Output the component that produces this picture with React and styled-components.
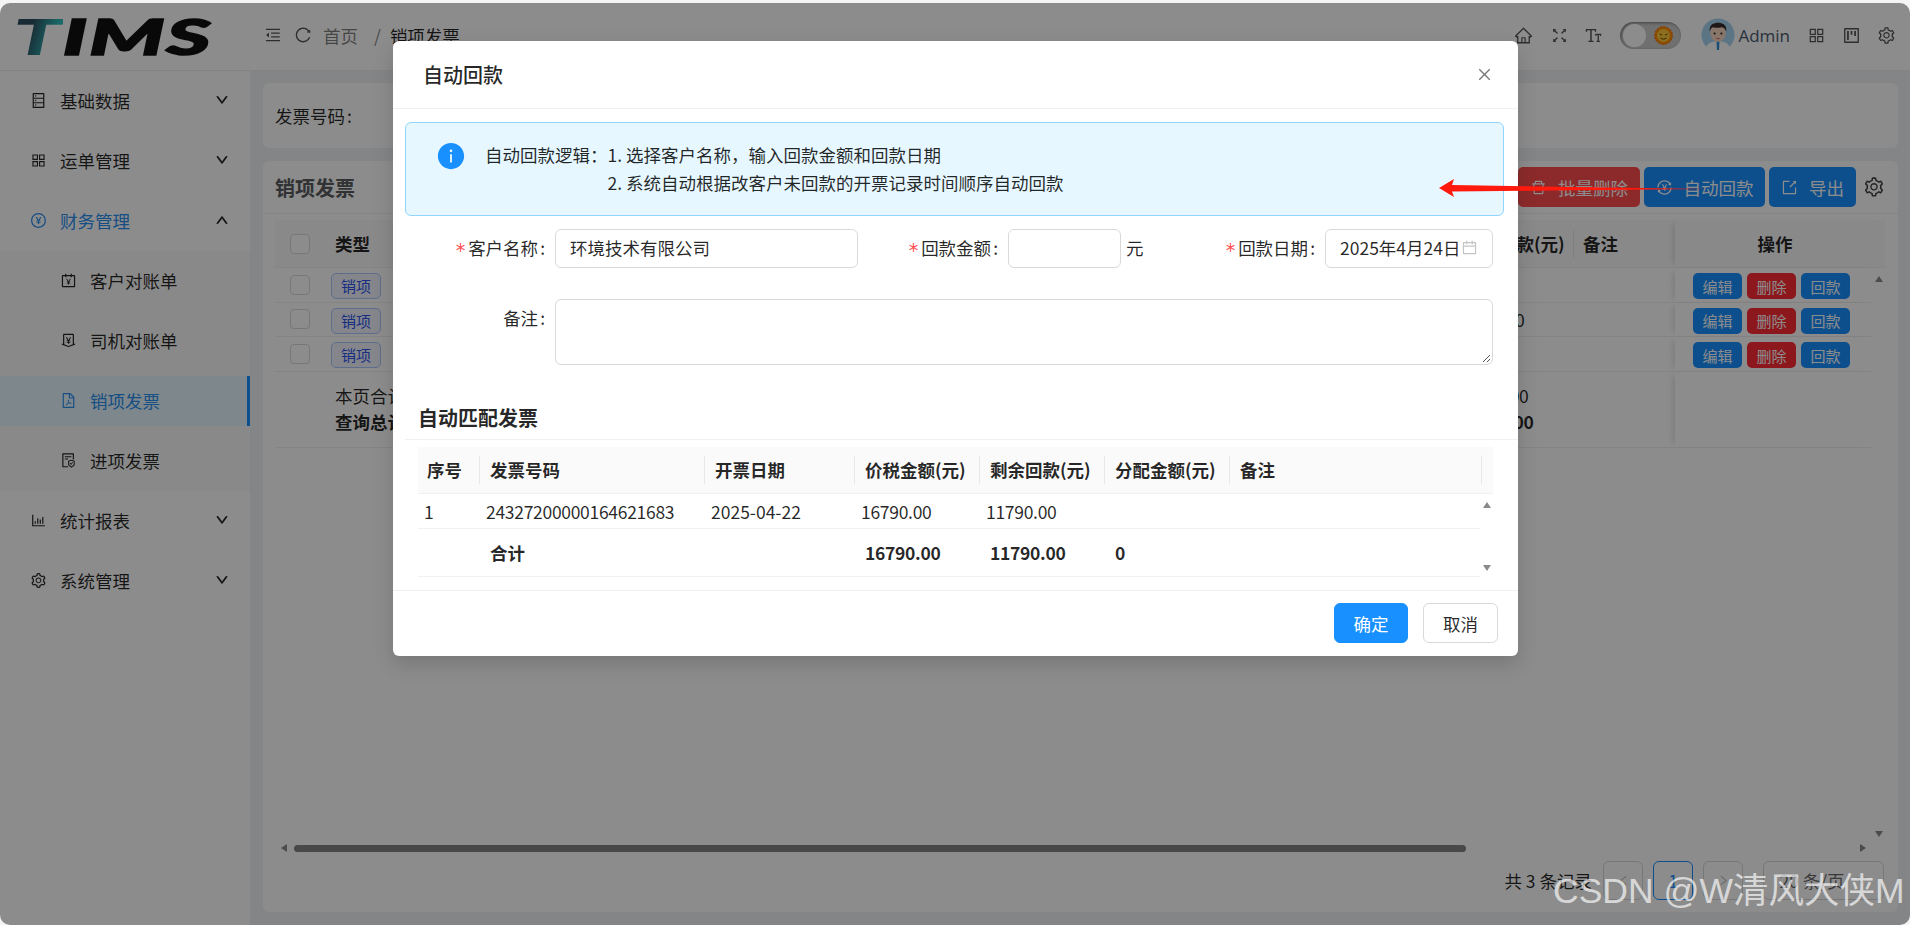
import React from 'react';
import styled, { createGlobalStyle } from 'styled-components';
import {
  AiOutlineDatabase, AiOutlineAppstore, AiOutlinePayCircle, AiOutlineAccountBook,
  AiOutlineMoneyCollect, AiOutlineFilePdf, AiOutlineFileProtect, AiOutlineBarChart,
  AiOutlineSetting, AiOutlineDown, AiOutlineUp, AiOutlineMenuFold, AiOutlineReload,
  AiOutlineHome, AiOutlineFullscreen, AiOutlineFontSize, AiOutlineProject, AiOutlineClose,
  AiOutlineDelete, AiOutlineTransaction, AiOutlineExport, AiOutlineCalendar, AiFillInfoCircle,
  AiOutlineLeft, AiOutlineRight,
} from 'react-icons/ai';

const Global = createGlobalStyle`
  html, body { margin: 0; height: 100%; overflow: hidden; background: #f4f4f4; }
  body { font-family: "Noto Sans CJK SC", "Liberation Sans", sans-serif; font-size: 17.5px; color: rgba(0,0,0,.85); }
  * { box-sizing: border-box; }
`;

const Shell = styled.div`
  position: relative;
  margin-top: 3px;
  height: 922px;
  width: 1910px;
  border-radius: 10px;
  overflow: hidden;
  background: #f0f2f5;
  display: flex;
  flex-direction: column;
`;

const TopBar = styled.header`
  height: 68px;
  flex: none;
  display: flex;
  align-items: center;
  background: #fff;
  border-bottom: 1px solid #eee;
  padding: 0 14px 3px 13px;
`;

const Logo = styled.div`
  width: 251px;
  height: 44px;
  font-family: Lato, sans-serif;
  font-weight: 900;
  font-style: italic;
  font-size: 49px;
  line-height: 46px;
  color: #111;
  -webkit-text-stroke: 1.5px #111;
  span { display: inline-block; transform: scaleX(1.74); transform-origin: left center; white-space: nowrap; letter-spacing: 1px; }
  b {
    font-weight: 900;
    -webkit-text-stroke: 0;
    background: linear-gradient(100deg, #2c4e5d 35%, #31c0c0 75%);
    -webkit-background-clip: text;
    background-clip: text;
    color: transparent;
  }
`;

const Crumbs = styled.div`
  display: flex;
  align-items: center;
  color: rgba(0,0,0,.5);
  svg { font-size: 18px; color: #555; }
`;

const CrumbIcon = styled.span`
  display: flex;
  margin-right: ${(p) => p.$gap}px;
`;

const CrumbSep = styled.span`
  margin: 0 9px 0 16px;
`;

const CrumbNow = styled.span`
  color: rgba(0,0,0,.85);
`;

const TopRight = styled.div`
  margin-left: auto;
  display: flex;
  align-items: center;
  color: #555;
  svg { font-size: 19px; display: block; }
`;

const TopIcon = styled.span`
  display: flex;
  margin-left: ${(p) => p.$left}px;
`;

const Switch = styled.div`
  width: 61px;
  height: 27px;
  margin-left: 17px;
  border-radius: 14px;
  background: #ccc;
  padding: 2px 8px 2px 3px;
  display: flex;
  align-items: center;
  justify-content: space-between;
  box-shadow: inset 1px 1px 3px rgba(0,0,0,.4);
`;

const Knob = styled.span`
  width: 23px;
  height: 23px;
  border-radius: 50%;
  background: #fff;
`;

const AdminName = styled.span`
  margin-left: 3px;
  color: #4a5a70;
  font-family: "Open Sans", sans-serif;
  font-size: 17px;
`;

const Body = styled.div`
  flex: 1;
  display: flex;
  min-height: 0;
`;

const Side = styled.nav`
  width: 250px;
  flex: none;
  background: #fff;
  display: flex;
  flex-direction: column;
`;

const Item = styled.div`
  height: 50px;
  flex: none;
  margin: 5px 0;
  display: flex;
  align-items: center;
  padding: 0 0 2px ${(p) => (p.$sub ? 60 : 30)}px;
  color: ${(p) => (p.$on ? '#2a8ff0' : 'rgba(0,0,0,.85)')};
  background: ${(p) => (p.$current ? '#e6f7ff' : 'transparent')};
  border-right: ${(p) => (p.$current ? '3px solid #1890ff' : '0')};
  svg { font-size: 17px; flex: none; }
`;

const ItemText = styled.span`
  margin-left: 13px;
  flex: 1;
`;

const Chevron = styled.span`
  display: flex;
  margin-right: 21px;
  color: rgba(0,0,0,.85);
  svg { font-size: 14px; stroke: currentColor; stroke-width: 50; }
`;

const SubMenu = styled.div`
  background: #fafafa;
  display: flex;
  flex-direction: column;
`;

const Main = styled.main`
  flex: 1;
  min-width: 0;
  padding: 12px 12px 13px 13px;
  display: flex;
  flex-direction: column;
  gap: 13px;
`;

const SearchCard = styled.section`
  height: 65px;
  flex: none;
  background: #fff;
  border-radius: 6px;
  padding: 0 12px;
  display: flex;
  align-items: center;
`;

const Colon = styled.span`
  margin-left: 2px;
`;

const TableCard = styled.section`
  flex: 1;
  min-height: 0;
  background: #fff;
  border-radius: 6px;
  display: flex;
  flex-direction: column;
`;

const CardHead = styled.div`
  height: 53px;
  flex: none;
  padding: 0 13px 0 12px;
  border-bottom: 1px solid #f0f0f0;
  display: flex;
  align-items: center;
  justify-content: space-between;
`;

const CardTitle = styled.h2`
  margin: 0;
  font-size: 20px;
  font-weight: 700;
  color: #5a5c60;
`;

const Tools = styled.div`
  display: flex;
  align-items: center;
  gap: 4px;
  svg { display: block; }
`;

const ToolButton = styled.button`
  height: 40px;
  width: ${(p) => p.$w}px;
  border: 0;
  border-radius: 5px;
  color: #fff;
  font: inherit;
  background: ${(p) => (p.$danger ? '#ff4d4f' : '#1890ff')};
  display: flex;
  align-items: center;
  justify-content: center;
  gap: 11px;
  padding: 0;
  svg { font-size: 17px; }
`;

const ToolGear = styled.span`
  margin-left: 3px;
  color: #444;
  svg { font-size: 22px; }
`;

const TableArea = styled.div`
  flex: 1;
  min-height: 0;
  margin: 6px 13px 0 12px;
  display: flex;
  flex-direction: column;
`;

const Columns = '50px 130px 970px 149px 101px';

const HeadRow = styled.div`
  height: 48px;
  flex: none;
  display: grid;
  grid-template-columns: ${Columns} 210px;
  align-items: center;
  background: #fafafa;
  border-bottom: 1px solid #f0f0f0;
  font-weight: 700;
`;

const Row = styled.div`
  height: ${(p) => p.$h}px;
  display: grid;
  grid-template-columns: ${Columns} 197px;
  align-items: center;
  border-bottom: 1px solid #f0f0f0;
`;

const TableBody = styled.div`
  flex: 1;
  min-height: 0;
  display: flex;
`;

const Rows = styled.div`
  width: 1597px;
`;

const VScroll = styled.div`
  width: 13px;
  display: flex;
  flex-direction: column;
  justify-content: space-between;
  align-items: center;
  padding: 8px 0 4px;
`;

const Arrow = styled.span`
  width: 0;
  height: 0;
  border-style: solid;
  border-color: transparent;
  ${(p) => p.$dir === 'up' && 'border-width: 0 4.5px 6px; border-bottom-color: #8a8a8a;'}
  ${(p) => p.$dir === 'down' && 'border-width: 6px 4.5px 0; border-top-color: #8a8a8a;'}
  ${(p) => p.$dir === 'left' && 'border-width: 4.5px 6px 4.5px 0; border-right-color: #8a8a8a;'}
  ${(p) => p.$dir === 'right' && 'border-width: 4.5px 0 4.5px 6px; border-left-color: #8a8a8a;'}
`;

const HScroll = styled.div`
  width: 1597px;
  height: 14px;
  flex: none;
  display: flex;
  align-items: center;
  padding: 0 6px;
`;

const Thumb = styled.span`
  width: 1172px;
  height: 7px;
  margin: 0 auto 0 7px;
  border-radius: 4px;
  background: #838383;
`;

const CheckCell = styled.span`
  display: flex;
  justify-content: center;
`;

const Check = styled.span`
  width: 20px;
  height: 20px;
  border: 1px solid #d9d9d9;
  border-radius: 4px;
  background: #fff;
`;

const Cell = styled.span`
  padding-left: ${(p) => p.$pad || 0}px;
  white-space: nowrap;
  letter-spacing: ${(p) => (p.$num ? '-.3px' : '0')};
`;

const HeadCell = styled.span`
  height: 28px;
  line-height: 28px;
  padding-left: ${(p) => p.$pad || 0}px;
  border-right: ${(p) => (p.$line ? '1px solid #e8e8e8' : '0')};
  white-space: nowrap;
`;

const FixedHead = styled.span`
  height: 100%;
  display: flex;
  align-items: center;
  justify-content: center;
  padding-right: 10px;
  box-shadow: -6px 0 6px -4px rgba(0,0,0,.12);
`;

const FixedCell = styled.span`
  height: 100%;
  display: flex;
  align-items: center;
  justify-content: center;
  gap: 5px;
  padding-right: 4px;
  background: #fff;
  box-shadow: -6px 0 6px -4px rgba(0,0,0,.12);
`;

const Tag = styled.span`
  width: 50px;
  height: 26px;
  border: 1px solid #adc6ff;
  border-radius: 5px;
  background: #f0f5ff;
  color: #2f54eb;
  font-size: 15px;
  line-height: 23px;
  text-align: center;
  margin: 3px 0 0 6px;
  display: block;
`;

const SmallButton = styled.button`
  width: 49px;
  height: 26px;
  margin-top: 3px;
  padding: 0;
  border: 0;
  border-radius: 5px;
  color: #fff;
  font: inherit;
  font-size: 15px;
  background: ${(p) => (p.$danger ? '#ff2a33' : '#1890ff')};
`;

const SummaryLines = styled.div`
  line-height: 26px;
  white-space: nowrap;
`;

const Strong = styled.div`
  font-weight: 700;
`;

const Pager = styled.div`
  height: 57px;
  flex: none;
  padding: 6px 14px 0 0;
  display: flex;
  justify-content: flex-end;
  align-items: flex-start;
  gap: 10px;
`;

const PagerText = styled.span`
  height: 39px;
  line-height: 39px;
  margin-right: 1px;
  font-size: 17.5px;
`;

const PageBox = styled.span`
  width: ${(p) => p.$w || 40}px;
  height: 39px;
  margin-left: ${(p) => p.$left || 0}px;
  border: 1px solid ${(p) => (p.$on ? '#1890ff' : '#d9d9d9')};
  border-radius: 6px;
  color: ${(p) => (p.$on ? '#1890ff' : 'rgba(0,0,0,.6)')};
  display: flex;
  align-items: center;
  justify-content: center;
  gap: 10px;
  svg { font-size: 13px; color: #bbb; }
`;

const Overlay = styled.div`
  position: absolute;
  inset: 0;
  background: rgba(0,0,0,.45);
`;

const Modal = styled.div`
  position: absolute;
  left: 393px;
  top: 38px;
  width: 1125px;
  height: 615px;
  background: #fff;
  border-radius: 6px;
  box-shadow: 0 8px 20px rgba(0,0,0,.15);
  display: flex;
  flex-direction: column;
`;

const ModalHead = styled.div`
  height: 68px;
  flex: none;
  display: flex;
  align-items: center;
  justify-content: space-between;
  padding: 0 25px 0 30px;
  border-bottom: 1px solid #f0f0f0;
  font-size: 20px;
  font-weight: 500;
  svg { display: block; font-size: 17px; color: #777; }
`;

const ModalBody = styled.div`
  flex: 1;
  min-height: 0;
  padding: 13px 14px 0 12px;
`;

const Alert = styled.div`
  height: 94px;
  background: #e6f7ff;
  border: 1px solid #91d5ff;
  border-radius: 6px;
  padding: 18px 0 0 31px;
  display: flex;
  line-height: 28px;
  svg { display: block; font-size: 30px; color: #1890ff; margin: 0 19px 0 -1px; }
`;

const AlertLabel = styled.span`
  white-space: nowrap;
`;

const FormGrid = styled.div`
  margin-top: 13px;
  display: grid;
  grid-template-columns: 453px 317px 318px;
  row-gap: 31px;
`;

const Field = styled.div`
  display: flex;
  grid-column: ${(p) => (p.$wide ? '1 / -1' : 'auto')};
`;

const Label = styled.label`
  width: 150px;
  flex: none;
  padding-right: 10px;
  height: 39px;
  line-height: 37px;
  text-align: right;
  white-space: nowrap;
`;

const Star = styled.i`
  color: #ff4d4f;
  font-family: "DejaVu Sans", sans-serif;
  font-size: 19px;
  font-style: normal;
  vertical-align: -2px;
  margin-right: 3px;
`;

const Input = styled.div`
  width: ${(p) => p.$w}px;
  height: ${(p) => p.$h || 39}px;
  flex: none;
  position: relative;
  border: 1px solid #d9d9d9;
  border-radius: 6px;
  padding: 0 14px 2px;
  line-height: 35px;
  white-space: nowrap;
  display: flex;
  align-items: center;
  justify-content: space-between;
  svg { font-size: 17px; flex: none; color: #c4c4c4; }
`;

const Resizer = styled.svg`
  position: absolute;
  right: 1px;
  bottom: 1px;
`;

const Unit = styled.span`
  margin-left: 5px;
  line-height: 37px;
`;

const SectionTitle = styled.h3`
  margin: 34px -14px 0 0;
  height: 41px;
  padding-left: 13px;
  font-size: 20px;
  font-weight: 700;
  line-height: 38px;
  border-bottom: 1px solid #f0f0f0;
`;

const Matched = styled.div`
  margin: 7px 0 0 13px;
  width: 1075px;
`;

const MatchColumns = '62px 225px 150px 125px 125px 125px 252px';

const MatchHead = styled.div`
  height: 47px;
  display: grid;
  grid-template-columns: ${MatchColumns} 1fr;
  align-items: center;
  background: #fafafa;
  border-bottom: 1px solid #f0f0f0;
  font-weight: 700;
`;

const MatchBody = styled.div`
  display: flex;
`;

const MatchRows = styled.div`
  width: 1062px;
`;

const MatchRow = styled.div`
  height: ${(p) => p.$h}px;
  display: grid;
  grid-template-columns: 62px 225px 150px 125px 125px 125px 1fr;
  align-items: center;
  border-bottom: 1px solid #f0f0f0;
  font-weight: ${(p) => (p.$bold ? 700 : 400)};
`;

const MatchScroll = styled.div`
  flex: 1;
  display: flex;
  flex-direction: column;
  justify-content: space-between;
  align-items: center;
  padding: 8px 0 6px;
`;

const ModalFoot = styled.div`
  height: 66px;
  flex: none;
  border-top: 1px solid #f0f0f0;
  padding: 12px 20px 0 0;
  display: flex;
  justify-content: flex-end;
  align-items: flex-start;
  gap: 15px;
`;

const FootButton = styled.button`
  width: ${(p) => p.$w}px;
  height: 40px;
  padding: 0;
  border-radius: 6px;
  font: inherit;
  border: 1px solid ${(p) => (p.$primary ? '#1890ff' : '#d9d9d9')};
  background: ${(p) => (p.$primary ? '#1890ff' : '#fff')};
  color: ${(p) => (p.$primary ? '#fff' : 'rgba(0,0,0,.85)')};
`;

const RedArrow = styled.svg`
  position: absolute;
  left: 1430px;
  top: 170px;
`;

const Watermark = styled.div`
  position: absolute;
  left: 1553px;
  top: 864px;
  font-family: "Liberation Sans", "Noto Sans CJK SC", sans-serif;
  font-size: 35.5px;
  line-height: 48px;
  color: rgba(255,255,255,.68);
  white-space: nowrap;
`;

function Avatar() {
  return (
    <svg width="34" height="34" viewBox="0 0 35 35" style={{ marginLeft: 20 }}>
      <circle cx="17.5" cy="17.5" r="17" fill="#a6d6f2" />
      <path d="M5 30c3-5 8-6 12.5-6S27 25 30 30a17 17 0 0 1-25 0z" fill="#fff" />
      <path d="M16 24h3l-.4 9h-2.2z" fill="#2f8fd0" />
      <ellipse cx="17.5" cy="15.5" rx="8" ry="9" fill="#f7d7c4" />
      <path d="M9 14c-1-7 4-9 8.500-9S27 7 26 14c-1-3-3-4.500-5-4.500-3 .8-7 .8-8 0-2 0-3.500 2-4 4.500z" fill="#3a2a2a" />
      <circle cx="14" cy="16" r="1.100" fill="#222" />
      <circle cx="21" cy="16" r="1.100" fill="#222" />
      <path d="M15.500 20.500h4a2 1.500 0 0 1-4 0z" fill="#d66" />
    </svg>
  );
}

function Sun() {
  return (
    <svg width="19" height="19" viewBox="0 0 19 19">
      <circle cx="9.5" cy="9.5" r="9" fill="#ff8a00" strokeDasharray="2 1.500" stroke="#e86a00" />
      <circle cx="9.5" cy="9.5" r="6.500" fill="#ffc83a" />
      <path d="M5.500 8l2.500 1M13.500 8L11 9M6.500 12c2 1.500 4 1.500 6 0" stroke="#6a4300" strokeWidth="1" fill="none" />
    </svg>
  );
}

const invoiceRows = [
  { h: 34.5, value: '0' },
  { h: 34.5, value: '11790.00' },
  { h: 34.5, value: '0' },
];

function App() {
  return (
    <>
      <Global />
      <Shell>
        <TopBar>
          <Logo><span><b>T</b>IMS</span></Logo>
          <Crumbs>
            <CrumbIcon $gap={12}><AiOutlineMenuFold /></CrumbIcon>
            <CrumbIcon $gap={11}><AiOutlineReload /></CrumbIcon>
            <span>首页</span>
            <CrumbSep>/</CrumbSep>
            <CrumbNow>销项发票</CrumbNow>
          </Crumbs>
          <TopRight>
            <TopIcon $left={0}><AiOutlineHome /></TopIcon>
            <TopIcon $left={17}><AiOutlineFullscreen /></TopIcon>
            <TopIcon $left={15}><AiOutlineFontSize /></TopIcon>
            <Switch><Knob /><Sun /></Switch>
            <Avatar />
            <AdminName>Admin</AdminName>
            <TopIcon $left={17}><AiOutlineAppstore /></TopIcon>
            <TopIcon $left={16}><AiOutlineProject /></TopIcon>
            <TopIcon $left={16}><AiOutlineSetting /></TopIcon>
          </TopRight>
        </TopBar>
        <Body>
          <Side>
            <Item><AiOutlineDatabase /><ItemText>基础数据</ItemText><Chevron><AiOutlineDown /></Chevron></Item>
            <Item><AiOutlineAppstore /><ItemText>运单管理</ItemText><Chevron><AiOutlineDown /></Chevron></Item>
            <Item $on><AiOutlinePayCircle /><ItemText>财务管理</ItemText><Chevron><AiOutlineUp /></Chevron></Item>
            <SubMenu>
              <Item $sub><AiOutlineAccountBook /><ItemText>客户对账单</ItemText></Item>
              <Item $sub><AiOutlineMoneyCollect /><ItemText>司机对账单</ItemText></Item>
              <Item $sub $on $current><AiOutlineFilePdf /><ItemText>销项发票</ItemText></Item>
              <Item $sub><AiOutlineFileProtect /><ItemText>进项发票</ItemText></Item>
            </SubMenu>
            <Item><AiOutlineBarChart /><ItemText>统计报表</ItemText><Chevron><AiOutlineDown /></Chevron></Item>
            <Item><AiOutlineSetting /><ItemText>系统管理</ItemText><Chevron><AiOutlineDown /></Chevron></Item>
          </Side>
          <Main>
            <SearchCard>发票号码<Colon>:</Colon></SearchCard>
            <TableCard>
              <CardHead>
                <CardTitle>销项发票</CardTitle>
                <Tools>
                  <ToolButton $w={122} $danger><AiOutlineDelete />批量删除</ToolButton>
                  <ToolButton $w={121}><AiOutlineTransaction />自动回款</ToolButton>
                  <ToolButton $w={87}><AiOutlineExport />导出</ToolButton>
                  <ToolGear><AiOutlineSetting /></ToolGear>
                </Tools>
              </CardHead>
              <TableArea>
                <HeadRow>
                  <CheckCell><Check /></CheckCell>
                  <HeadCell $pad={10}>类型</HeadCell>
                  <span />
                  <HeadCell $pad={39} $line>剩余回款(元)</HeadCell>
                  <HeadCell $pad={9}>备注</HeadCell>
                  <FixedHead>操作</FixedHead>
                </HeadRow>
                <TableBody>
                  <Rows>
                    {invoiceRows.map((row, i) => (
                      <Row key={i} $h={row.h}>
                        <CheckCell><Check /></CheckCell>
                        <Tag>销项</Tag>
                        <span />
                        <Cell $pad={29} $num>{row.value}</Cell>
                        <span />
                        <FixedCell>
                          <SmallButton>编辑</SmallButton>
                          <SmallButton $danger>删除</SmallButton>
                          <SmallButton>回款</SmallButton>
                        </FixedCell>
                      </Row>
                    ))}
                    <Row $h={76}>
                      <span />
                      <SummaryLines><Cell $pad={10}>本页合计</Cell><Strong><Cell $pad={10}>查询总计</Cell></Strong></SummaryLines>
                      <span />
                      <SummaryLines>
                        <Cell $pad={33} $num>11790.00</Cell>
                        <Strong><Cell $pad={33} $num>11790.00</Cell></Strong>
                      </SummaryLines>
                      <span />
                      <FixedCell />
                    </Row>
                  </Rows>
                  <VScroll><Arrow $dir="up" /><Arrow $dir="down" /></VScroll>
                </TableBody>
                <HScroll><Arrow $dir="left" /><Thumb /><Arrow $dir="right" /></HScroll>
              </TableArea>
              <Pager>
                <PagerText>共 3 条记录</PagerText>
                <PageBox><AiOutlineLeft /></PageBox>
                <PageBox $on>1</PageBox>
                <PageBox><AiOutlineRight /></PageBox>
                <PageBox $w={121} $left={10}>20 条/页<AiOutlineDown /></PageBox>
              </Pager>
            </TableCard>
          </Main>
        </Body>
        <Overlay />
        <Modal>
          <ModalHead>自动回款<AiOutlineClose /></ModalHead>
          <ModalBody>
            <Alert>
              <AiFillInfoCircle />
              <AlertLabel>自动回款逻辑：</AlertLabel>
              <div>
                <div>1. 选择客户名称，输入回款金额和回款日期</div>
                <div>2. 系统自动根据改客户未回款的开票记录时间顺序自动回款</div>
              </div>
            </Alert>
            <FormGrid>
              <Field>
                <Label><Star>*</Star>客户名称<Colon>:</Colon></Label>
                <Input $w={303}>环境技术有限公司</Input>
              </Field>
              <Field>
                <Label><Star>*</Star>回款金额<Colon>:</Colon></Label>
                <Input $w={113} />
                <Unit>元</Unit>
              </Field>
              <Field>
                <Label><Star>*</Star>回款日期<Colon>:</Colon></Label>
                <Input $w={168}>2025年4月24日<AiOutlineCalendar /></Input>
              </Field>
              <Field $wide>
                <Label>备注<Colon>:</Colon></Label>
                <Input $w={938} $h={66}>
                  <Resizer width="9" height="9" viewBox="0 0 9 9">
                    <path d="M1 8l7-7M5 8l3-3" stroke="#555" strokeWidth="1" />
                  </Resizer>
                </Input>
              </Field>
            </FormGrid>
            <SectionTitle>自动匹配发票</SectionTitle>
            <Matched>
              <MatchHead>
                <HeadCell $pad={9} $line>序号</HeadCell>
                <HeadCell $pad={10} $line>发票号码</HeadCell>
                <HeadCell $pad={10} $line>开票日期</HeadCell>
                <HeadCell $pad={10} $line>价税金额(元)</HeadCell>
                <HeadCell $pad={10} $line>剩余回款(元)</HeadCell>
                <HeadCell $pad={10} $line>分配金额(元)</HeadCell>
                <HeadCell $pad={10} $line>备注</HeadCell>
              </MatchHead>
              <MatchBody>
                <MatchRows>
                  <MatchRow $h={35}>
                    <Cell $pad={6}>1</Cell>
                    <Cell $pad={6} $num>24327200000164621683</Cell>
                    <Cell $pad={6}>2025-04-22</Cell>
                    <Cell $pad={6} $num>16790.00</Cell>
                    <Cell $pad={6} $num>11790.00</Cell>
                    <span />
                    <span />
                  </MatchRow>
                  <MatchRow $h={48} $bold>
                    <span />
                    <Cell $pad={10}>合计</Cell>
                    <span />
                    <Cell $pad={10} $num>16790.00</Cell>
                    <Cell $pad={10} $num>11790.00</Cell>
                    <Cell $pad={10}>0</Cell>
                    <span />
                  </MatchRow>
                </MatchRows>
                <MatchScroll><Arrow $dir="up" /><Arrow $dir="down" /></MatchScroll>
              </MatchBody>
            </Matched>
          </ModalBody>
          <ModalFoot>
            <FootButton $w={74} $primary>确定</FootButton>
            <FootButton $w={75}>取消</FootButton>
          </ModalFoot>
        </Modal>
        <RedArrow width="285" height="30" viewBox="0 0 285 30">
          <polygon points="9,15 24,6 22,12 277,16 22,18.500 24,24" fill="#ff1a0d" />
        </RedArrow>
        <Watermark>CSDN @W清风大侠M</Watermark>
      </Shell>
    </>
  );
}

export default App;
